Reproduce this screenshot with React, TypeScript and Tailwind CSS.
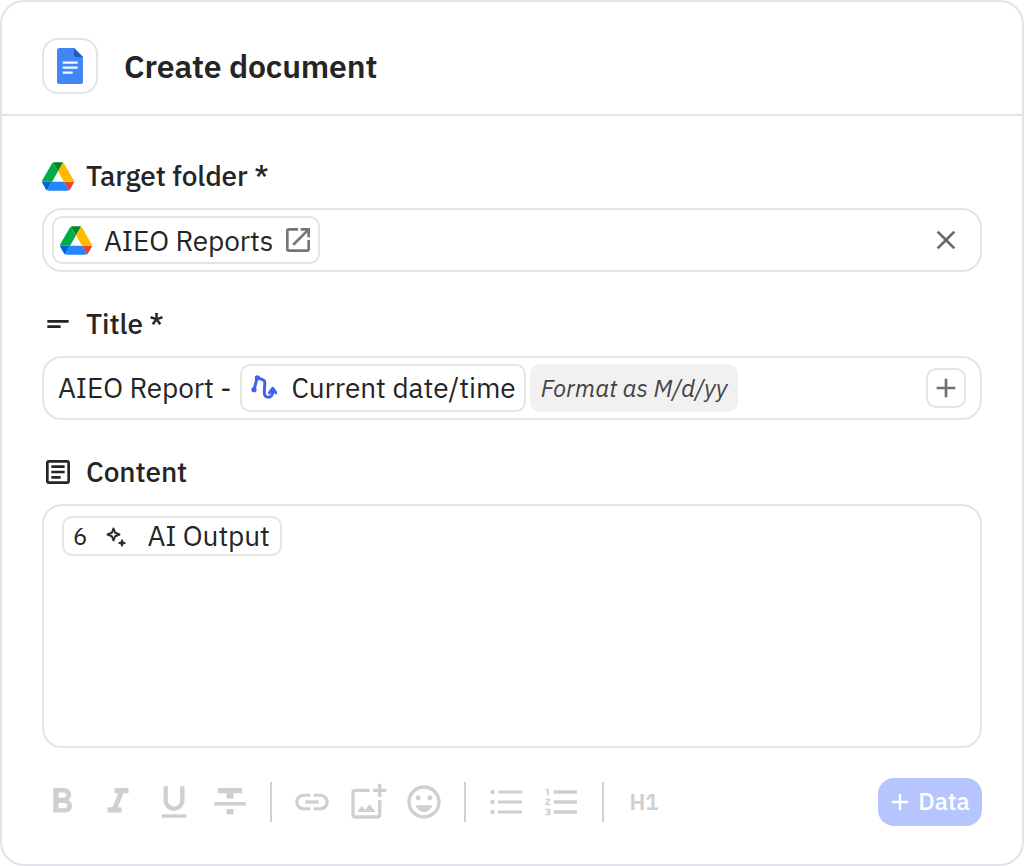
import React from 'react';
import {
  MdAdd,
  MdClose,
  MdFormatBold,
  MdFormatItalic,
  MdFormatListNumbered,
  MdFormatStrikethrough,
  MdFormatUnderlined,
  MdLink,
  MdOpenInNew,
  MdOutlineAddPhotoAlternate,
  MdOutlineArticle,
  MdOutlineEmojiEmotions,
  MdShortText,
} from 'react-icons/md';

const DriveIcon = () => (
  <svg viewBox="0 0 87.3 78" className="w-8 h-[29px] shrink-0">
    <path d="m6.6 66.85 3.85 6.65c.8 1.4 1.95 2.5 3.3 3.3l13.75-23.8h-27.5c0 1.55.4 3.1 1.2 4.5z" fill="#0066da" />
    <path d="m43.65 25-13.75-23.8c-1.35.8-2.5 1.9-3.3 3.3l-25.4 44a9.06 9.06 0 0 0 -1.2 4.5h27.5z" fill="#00ac47" />
    <path d="m73.55 76.8c1.35-.8 2.5-1.9 3.3-3.3l1.6-2.75 7.65-13.25c.8-1.4 1.2-2.95 1.2-4.5h-27.502l5.852 11.5z" fill="#ea4335" />
    <path d="m43.65 25 13.75-23.8c-1.35-.8-2.9-1.2-4.5-1.2h-18.5c-1.6 0-3.15.45-4.5 1.2z" fill="#00832d" />
    <path d="m59.8 53h-32.3l-13.75 23.8c1.35.8 2.9 1.2 4.5 1.2h50.8c1.6 0 3.15-.45 4.5-1.2z" fill="#2684fc" />
    <path d="m73.4 26.5-12.7-22c-.8-1.4-1.95-2.5-3.3-3.3l-13.75 23.8 16.15 28h27.45c0-1.55-.4-3.1-1.2-4.5z" fill="#ffba00" />
  </svg>
);

const DocsIcon = () => (
  <svg viewBox="0 0 26 36" className="w-[26px] h-9">
    <path d="M2.5 0H17l9 9v24.500a2.500 2.500 0 0 1-2.500 2.500h-21A2.500 2.500 0 0 1 0 33.500V2.500A2.500 2.500 0 0 1 2.500 0z" fill="#4285f4" />
    <path d="M17 0l9 9h-6.500A2.500 2.500 0 0 1 17 6.500z" fill="#1a5fc8" />
    <path d="M5.700 13.600h15v2.100h-15zM5.700 18.600h15v2.100h-15zM5.700 23.600h10v2.100h-10z" fill="#f4f7fe" />
  </svg>
);

const FlowIcon = () => (
  <svg viewBox="0 0 26 26" fill="none" className="w-[26px] h-[26px] shrink-0" stroke="#3f62f0" strokeWidth="3" strokeLinecap="round" strokeLinejoin="round">
    <path d="M6.300 2.600L3 14.700" />
    <path d="M6.300 2.600L12.500 5.200c1.200.6 1.400 1.500 1.300 2.800L13.300 17.500c-.1 3 1.600 4.800 4 4.800 2.800 0 4.400-2.400 4.400-5.500v-3" />
    <path d="M18.300 17.800L21.700 13.300 25 17.800" />
    <circle cx="6.300" cy="2.800" r="2.600" fill="#3f62f0" stroke="none" />
    <circle cx="3" cy="14.700" r="2.600" fill="#3f62f0" stroke="none" />
  </svg>
);

const SparkIcon = () => (
  <svg viewBox="0 0 24 24" fill="none" className="w-6 h-6 shrink-0" stroke="#2a2a2a" strokeWidth="2" strokeLinejoin="round">
    <path d="M9.500 4.500l1.700 4.300 4.300 1.700-4.300 1.700-1.700 4.300-1.700-4.300-4.300-1.700 4.300-1.700z" />
    <path d="M18 15.500l1 2.500 2.500 1-2.500 1-1 2.500-1-2.500-2.500-1 2.500-1z" fill="#2a2a2a" strokeWidth="1" />
  </svg>
);

const BulletsIcon = () => (
  <svg viewBox="0 0 32 32" className="w-8 h-8" fill="currentColor">
    <circle cx="2.500" cy="6" r="2.200" />
    <circle cx="2.500" cy="16" r="2.200" />
    <circle cx="2.500" cy="26" r="2.200" />
    <rect x="8" y="4.500" width="24" height="3" />
    <rect x="8" y="14.500" width="24" height="3" />
    <rect x="8" y="24.500" width="24" height="3" />
  </svg>
);

const Divider = () => <div className="w-0.5 h-10 bg-[#cfcfcf] ml-3" />;

const Tool = ({ children }: { children: React.ReactNode }) => (
  <div className="w-14 flex items-center justify-center">{children}</div>
);

const App = () => {
  return (
    <div className="w-[1024px] h-[866px] bg-white border-2 border-[#e2e2ea] rounded-[24px] flex flex-col text-[#252525] font-['IBM_Plex_Sans','Roboto',sans-serif] overflow-hidden">
      <header className="h-[114px] shrink-0 border-b-2 border-[#e4e4e8] flex items-start pl-10 pt-9 gap-[26px]">
        <div className="w-14 h-14 border-2 border-[#e4e4e4] rounded-2xl flex items-center justify-center">
          <DocsIcon />
        </div>
        <h1 className="text-[32px] font-semibold leading-[56px] tracking-[-0.13px]">Create document</h1>
      </header>

      <main className="flex-1 flex flex-col px-10 pt-9">
        <div className="flex items-center h-12 gap-3">
          <DriveIcon />
          <span className="text-[28px] font-medium tracking-[-0.1px]">Target folder *</span>
        </div>
        <div className="mt-2 h-16 border-2 border-[#e4e4e4] rounded-[20px] flex items-center pl-2 pr-[18px]">
          <div className="h-12 border-2 border-[#e4e4e4] rounded-[10px] flex items-center pl-1.5 pr-1">
            <DriveIcon />
            <span className="ml-3 mt-0.5 text-[28px] tracking-[-0.1px]">AIEO Reports</span>
            <MdOpenInNew className="ml-[9px] w-8 h-8 text-[#757575]" />
          </div>
          <MdClose className="ml-auto w-8 h-8 text-[#6b6b6b]" />
        </div>

        <div className="flex items-center h-12 gap-3 mt-[28px]">
          <MdShortText className="w-8 h-8 text-[#252525]" />
          <span className="text-[28px] font-medium tracking-[-0.1px]">Title *</span>
        </div>
        <div className="mt-2 h-16 border-2 border-[#e4e4e4] rounded-[20px] flex items-center pl-3.5 pr-3.5">
          <span className="text-[28px] whitespace-nowrap tracking-[-0.1px]">AIEO Report -</span>
          <div className="ml-[9px] h-12 border-2 border-[#e4e4e4] rounded-[10px] flex items-center pl-[9px] pr-2">
            <FlowIcon />
            <span className="ml-3.5 text-[28px] whitespace-nowrap tracking-[-0.05px]">Current date/time</span>
          </div>
          <div className="ml-1 h-12 bg-[#f1f1f1] rounded-[10px] flex items-center px-[11px]">
            <span className="text-[24px] italic text-[#444444] whitespace-nowrap">Format as M/d/yy</span>
          </div>
          <div className="ml-auto w-10 h-10 border-2 border-[#e4e4e4] rounded-[10px] flex items-center justify-center">
            <MdAdd className="w-8 h-8 text-[#707070]" />
          </div>
        </div>

        <div className="flex items-center h-12 gap-3 mt-[28px]">
          <MdOutlineArticle className="w-8 h-8 text-[#252525]" />
          <span className="text-[28px] font-medium tracking-[-0.1px]">Content</span>
        </div>
        <div className="mt-2 h-[244px] border-2 border-[#e4e4e4] rounded-[20px] pl-[18px] pt-2.5">
          <div className="inline-flex h-10 border-2 border-[#e4e4e4] rounded-[10px] items-center pl-[9px] pr-2.5">
            <span className="text-[24px]">6</span>
            <span className="ml-[17px]"><SparkIcon /></span>
            <span className="ml-[19px] text-[28px] tracking-[-0.1px]">AI Output</span>
          </div>
        </div>

        <div className="mt-[30px] -ml-2 flex items-center h-12 text-[#cfcfcf]">
          <Tool><MdFormatBold className="w-[42px] h-[42px]" /></Tool>
          <Tool><MdFormatItalic className="w-[42px] h-[42px]" /></Tool>
          <Tool><MdFormatUnderlined className="w-[42px] h-[42px]" /></Tool>
          <Tool><MdFormatStrikethrough className="w-[42px] h-[42px]" /></Tool>
          <Divider />
          <div className="flex items-center ml-3">
            <Tool><MdLink className="w-10 h-10" /></Tool>
            <Tool><MdOutlineAddPhotoAlternate className="w-10 h-10" /></Tool>
            <Tool><MdOutlineEmojiEmotions className="w-10 h-10" /></Tool>
          </div>
          <Divider />
          <div className="flex items-center ml-3">
            <Tool><BulletsIcon /></Tool>
            <Tool><MdFormatListNumbered className="w-10 h-10" /></Tool>
          </div>
          <Divider />
          <div className="ml-3">
            <Tool><span className="text-[22px] font-semibold mb-0.5">H1</span></Tool>
          </div>
          <button className="ml-auto h-12 w-[104px] bg-[#b7c5ff] rounded-2xl text-white flex items-center justify-center gap-1 pr-1">
            <MdAdd className="w-7 h-7" />
            <span className="text-[24px] font-medium mb-0.5">Data</span>
          </button>
        </div>
      </main>
    </div>
  );
};

export default App;
